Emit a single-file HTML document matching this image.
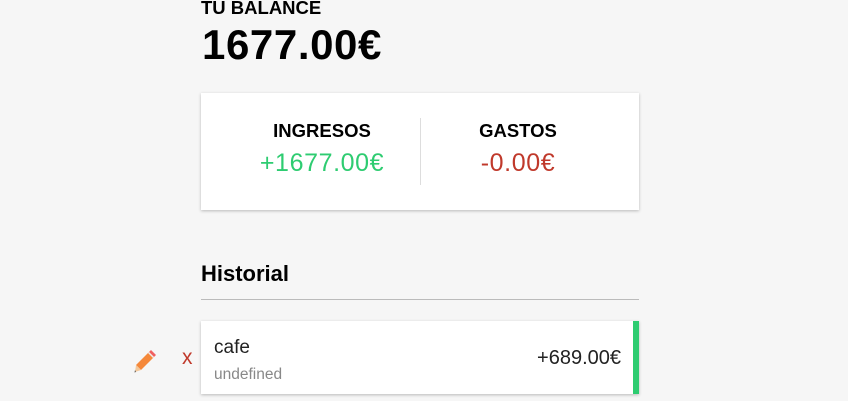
<!DOCTYPE html>
<html><head><style>
body{margin:0;width:848px;height:401px;background:#f6f6f6;font-family:"Liberation Sans",sans-serif;position:relative;overflow:hidden;color:#000}
.a{position:absolute;white-space:nowrap}
</style></head><body>
<div class="a" style="left:201px;top:-3px;font-size:18.5px;font-weight:bold">TU BALANCE</div>
<div class="a" style="left:202px;top:21px;font-size:42px;font-weight:bold;letter-spacing:0.6px">1677.00€</div>
<div class="a" style="left:201px;top:93px;width:438px;height:117px;background:#fff;box-shadow:0 1px 3px rgba(0,0,0,.25)"></div>
<div class="a" style="left:420px;top:118px;width:1px;height:67px;background:#ddd"></div>
<div class="a" style="left:222px;top:120px;width:200px;text-align:center;font-size:18.5px;font-weight:bold">INGRESOS</div>
<div class="a" style="left:222px;top:149px;width:200px;text-align:center;font-size:25px;color:#2ecc71;letter-spacing:0.6px">+1677.00€</div>
<div class="a" style="left:418px;top:120px;width:200px;text-align:center;font-size:18.5px;font-weight:bold">GASTOS</div>
<div class="a" style="left:418px;top:149px;width:200px;text-align:center;font-size:25px;color:#c0392b;letter-spacing:0.6px">-0.00€</div>
<div class="a" style="left:201px;top:261px;font-size:22px;font-weight:bold">Historial</div>
<div class="a" style="left:201px;top:299px;width:438px;height:1px;background:#bbb"></div>
<div class="a" style="left:201px;top:321px;width:432px;height:73px;background:#fff;border-right:6px solid #2ecc71;box-shadow:0 1px 3px rgba(0,0,0,.25)"></div>
<div class="a" style="left:214px;top:337px;font-size:19px;color:#222">cafe</div>
<div class="a" style="left:214px;top:366px;font-size:15.5px;color:#888">undefined</div>
<div class="a" style="left:500px;top:347px;width:121px;text-align:right;font-size:20px;color:#222">+689.00€</div>
<div class="a" style="left:182px;top:346px;font-size:21px;color:#c0392b">x</div>
<svg class="a" style="left:132px;top:345px" width="28" height="28" viewBox="0 0 28 28">
<path d="M4 20 L17 7 L22 12 L9 25 Z" fill="#f5883a"/>
<path d="M17 7 L19 5 L24 10 L22 12 Z" fill="#f06060"/>
<path d="M17 7 L22 12 L21 13 L16 8Z" fill="#eee"/>
<path d="M4 20 L9 25 L3 27 Z" fill="#f3c89b"/>
<path d="M3 25 L4 27 L2.5 27.5Z" fill="#555"/>
</svg>
</body></html>
